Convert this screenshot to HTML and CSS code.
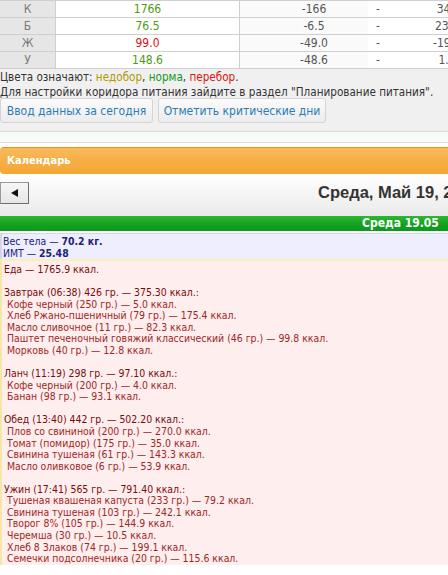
FILE: index.html
```html
<!DOCTYPE html>
<html lang="ru">
<head>
<meta charset="utf-8">
<title>Дневник питания</title>
<link rel="stylesheet" href="styles.css">
</head>
<body>
<div class="page">
  <div class="top">
    <div class="stats">
      <div class="srow"><div class="lbl">К</div><div class="val ok">1766</div><div class="c3">-166</div><div class="c4">-</div><div class="c5">344</div></div>
      <div class="srow"><div class="lbl">Б</div><div class="val ok">76.5</div><div class="c3">-6.5</div><div class="c4">-</div><div class="c5">23.5</div></div>
      <div class="srow"><div class="lbl">Ж</div><div class="val over">99.0</div><div class="c3">-49.0</div><div class="c4">-</div><div class="c5">-19.0</div></div>
      <div class="srow"><div class="lbl">У</div><div class="val ok">148.6</div><div class="c3">-48.6</div><div class="c4">-</div><div class="c5">1.4</div></div>
    </div>
    <div class="legend">
      <div>Цвета означают: <span class="under">недобор</span>, <span class="norm">норма</span>, <span class="over">перебор</span>.</div>
      <div>Для настройки коридора питания зайдите в раздел "Планирование питания".</div>
    </div>
    <div class="actions">
      <button class="btn b1">Ввод данных за сегодня</button>
      <button class="btn b2">Отметить критические дни</button>
    </div>
  </div>
  <div class="band"></div>
  <div class="gap"></div>
  <div class="cal-head">Календарь</div>
  <div class="cal-nav">
    <button class="prev"><span class="tri"></span></button>
    <div class="date">Среда, Май 19, 2010</div>
  </div>
  <div class="day-bar">Среда 19.05</div>
  <div class="sep"></div>
  <div class="body-info">
    <div>Вес тела — <b>70.2 кг.</b></div>
    <div>ИМТ — <b>25.48</b></div>
  </div>
  <div class="food">
    <div class="hd">Еда — 1765.9 ккал.</div>
    <div class="blank"></div>
    <div class="hd">Завтрак (06:38) 426 гр. — 375.30 ккал.:</div>
    <div class="it">Кофе черный (250 гр.) — 5.0 ккал.</div>
    <div class="it">Хлеб Ржано-пшеничный (79 гр.) — 175.4 ккал.</div>
    <div class="it">Масло сливочное (11 гр.) — 82.3 ккал.</div>
    <div class="it">Паштет печеночный говяжий классический (46 гр.) — 99.8 ккал.</div>
    <div class="it">Морковь (40 гр.) — 12.8 ккал.</div>
    <div class="blank"></div>
    <div class="hd">Ланч (11:19) 298 гр. — 97.10 ккал.:</div>
    <div class="it">Кофе черный (200 гр.) — 4.0 ккал.</div>
    <div class="it">Банан (98 гр.) — 93.1 ккал.</div>
    <div class="blank"></div>
    <div class="hd">Обед (13:40) 442 гр. — 502.20 ккал.:</div>
    <div class="it">Плов со свининой (200 гр.) — 270.0 ккал.</div>
    <div class="it">Томат (помидор) (175 гр.) — 35.0 ккал.</div>
    <div class="it">Свинина тушеная (61 гр.) — 143.3 ккал.</div>
    <div class="it">Масло оливковое (6 гр.) — 53.9 ккал.</div>
    <div class="blank"></div>
    <div class="hd">Ужин (17:41) 565 гр. — 791.40 ккал.:</div>
    <div class="it">Тушеная квашеная капуста (233 гр.) — 79.2 ккал.</div>
    <div class="it">Свинина тушеная (103 гр.) — 242.1 ккал.</div>
    <div class="it">Творог 8% (105 гр.) — 144.9 ккал.</div>
    <div class="it">Черемша (30 гр.) — 10.5 ккал.</div>
    <div class="it">Хлеб 8 Злаков (74 гр.) — 199.1 ккал.</div>
    <div class="it">Семечки подсолнечника (20 гр.) — 115.6 ккал.</div>
  </div>
</div>
</body>
</html>
```

FILE: styles.css
```css
html, body {
  margin: 0;
  padding: 0;
  background: #ffffff;
}
.page {
  width: 448px;
  height: 575px;
  overflow: hidden;
  font-family: "DejaVu Sans Condensed", "DejaVu Sans", sans-serif;
}
.top {
  background: #f0f0f0;
  padding-bottom: 8px;
}
.stats {
  border-top: 1px solid #cfcfcf;
  background: #ffffff;
}
.srow {
  display: grid;
  grid-template-columns: 55px 1px 183px 1px 128px 20px 118px;
  height: 16px;
  border-bottom: 1px solid #cfcfcf;
  font-size: 12px;
  line-height: 16px;
  white-space: nowrap;
}
.srow .lbl {
  grid-column: 1;
  background: #e6e6e6;
  color: #7a7a7a;
  text-align: center;
  border-right: 1px solid #cfcfcf;
  grid-column-end: 3;
}
.srow .val {
  grid-column: 3;
  text-align: center;
  border-right: 1px solid #cfcfcf;
  grid-column-end: 5;
}
.srow .c3 {
  text-align: center;
  padding-left: 20px;
  color: #555;
  background: #fafafa;
}
.srow .c4 {
  text-align: center;
  color: #555;
}
.srow .c5 {
  text-align: center;
  color: #555;
}
.ok { color: #4e9a12; }
.over { color: #e01010; }
.under { color: #b09a00; }
.norm { color: #109a20; }
.legend {
  font-size: 11.6px;
  line-height: 15px;
  color: #333;
  padding-top: 1px;
  white-space: nowrap;
}
.actions {
  display: flex;
  gap: 5px;
  margin-top: -2px;
}
.btn {
  height: 25px;
  margin: 0;
  padding: 0;
  border: 1px solid #d4d4d4;
  border-radius: 3px;
  background: linear-gradient(#fbfbfb, #ececec);
  color: #2b7bb5;
  font-family: inherit;
  font-size: 12px;
}
.b1 { width: 153px; }
.b2 { width: 168px; }
.band {
  height: 10px;
  border-top: 1px solid #dadada;
  border-bottom: 1px solid #dedede;
  background: #f8fcf8;
}
.gap {
  height: 4px;
  background: #ffffff;
}
.cal-head {
  height: 26px;
  border-top: 1px solid #e8951c;
  border-radius: 4px 0 0 4px;
  background: linear-gradient(#f9ba5c, #f6ae45 50%, #f5a733);
  color: #ffffff;
  font-weight: bold;
  font-size: 11px;
  line-height: 25px;
  padding-left: 7px;
}
.cal-nav {
  height: 42px;
  display: flex;
  align-items: flex-start;
  background: linear-gradient(#ffffff, #eaeaea);
}
.prev {
  flex-shrink: 0;
  margin: 8px 0 0 0;
  width: 29px;
  height: 22px;
  padding: 0;
  border: 1px solid;
  border-color: #9a9a9a #6e6e6e #6e6e6e #9a9a9a;
  background: linear-gradient(#f6f6f6, #e6e6e6);
  display: flex;
  align-items: center;
  justify-content: center;
}
.tri {
  width: 0;
  height: 0;
  border-top: 4px solid transparent;
  border-bottom: 4px solid transparent;
  border-right: 7px solid #111;
}
.date {
  flex-shrink: 0;
  margin-left: 289px;
  margin-top: 9px;
  font-family: "Liberation Sans", Arial, sans-serif;
  font-weight: bold;
  font-size: 16.5px;
  color: #333333;
  white-space: nowrap;
}
.day-bar {
  height: 15px;
  background: linear-gradient(#2cb830, #13a022 60%, #0e981d);
  color: #ffffff;
  font-weight: bold;
  font-size: 12px;
  line-height: 15px;
  padding-left: 362px;
  white-space: nowrap;
}
.sep {
  height: 2px;
  background: #ffffff;
}
.body-info {
  border-top: 1px solid #d6d6ee;
  border-left: 2px solid #d4d4ea;
  background: #eeeeff;
  color: #222276;
  font-size: 10.4px;
  line-height: 11.56px;
  padding: 2px 0 0 1px;
}
.body-info b {
  font-weight: bold;
}
.food {
  border-top: 2px solid #fbefb4;
  border-left: 2px solid #f6e6a8;
  background: #ffeeee;
  font-size: 10.4px;
  line-height: 11.56px;
  padding: 3px 0 0 2px;
  white-space: nowrap;
}
.food .hd { color: #7a0a0a; }
.food .it { color: #a02626; padding-left: 3px; }
.food .blank { height: 11.56px; }
```
